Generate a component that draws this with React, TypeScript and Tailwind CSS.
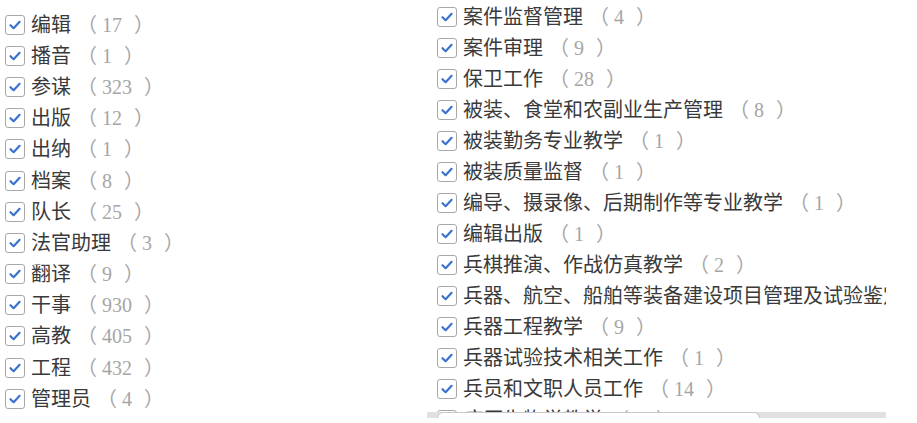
type Item = {
  name: string;
  count: number;
};

const leftItems: Item[] = [
  { name: "编辑", count: 17 },
  { name: "播音", count: 1 },
  { name: "参谋", count: 323 },
  { name: "出版", count: 12 },
  { name: "出纳", count: 1 },
  { name: "档案", count: 8 },
  { name: "队长", count: 25 },
  { name: "法官助理", count: 3 },
  { name: "翻译", count: 9 },
  { name: "干事", count: 930 },
  { name: "高教", count: 405 },
  { name: "工程", count: 432 },
  { name: "管理员", count: 4 },
];

const rightItems: Item[] = [
  { name: "案件监督管理", count: 4 },
  { name: "案件审理", count: 9 },
  { name: "保卫工作", count: 28 },
  { name: "被装、食堂和农副业生产管理", count: 8 },
  { name: "被装勤务专业教学", count: 1 },
  { name: "被装质量监督", count: 1 },
  { name: "编导、摄录像、后期制作等专业教学", count: 1 },
  { name: "编辑出版", count: 1 },
  { name: "兵棋推演、作战仿真教学", count: 2 },
  { name: "兵器、航空、船舶等装备建设项目管理及试验鉴定", count: 3 },
  { name: "兵器工程教学", count: 9 },
  { name: "兵器试验技术相关工作", count: 1 },
  { name: "兵员和文职人员工作", count: 14 },
  { name: "病原生物学教学", count: 1 },
];

function CheckBox() {
  return (
    <span className="flex h-[20px] w-[20px] shrink-0 items-center justify-center rounded-[3px] border border-[#a8a8a8] bg-white">
      <svg width="14" height="14" viewBox="0 0 14 14" fill="none">
        <path
          d="M2.5 7.2 L5.6 10.2 L11.6 3.8"
          stroke="#3b72cc"
          strokeWidth="2.2"
          strokeLinecap="round"
          strokeLinejoin="round"
        />
      </svg>
    </span>
  );
}

function Row({ item, tall }: { item: Item; tall?: boolean }) {
  return (
    <label
      className={
        (tall ? "h-[31.2px]" : "h-[31px]") +
        " flex shrink-0 items-center gap-[6px] whitespace-nowrap"
      }
    >
      <CheckBox />
      <span className="text-[20px] leading-none text-[#3a3a3a]">{item.name}</span>
      <span className="text-[20px] leading-none text-[#a6a6a6]">
        （ <span className="mr-[7px]">{item.count}</span> ）
      </span>
    </label>
  );
}

export default function App() {
  return (
    <div
      className="flex h-[423px] w-[917px] overflow-hidden bg-white"
      style={{ fontFamily: '"Liberation Serif", "Noto Sans CJK SC", serif' }}
    >
      <div className="flex w-[427px] shrink-0 flex-col pl-[5px] pt-[9px]">
        {leftItems.map((item, index) => (
          <Row item={item} tall key={index} />
        ))}
      </div>

      <div className="flex w-[459px] shrink-0 flex-col">
        <div className="flex h-[412px] flex-col overflow-hidden pl-[10px] pt-[1px]">
          {rightItems.map((item, index) => (
            <Row item={item} key={index} />
          ))}
        </div>
        <div className="flex h-[6px] bg-[#e1e1e1] pl-[10px]">
          <div className="h-full w-[323px] rounded-t-[6px] border-x border-t border-[#c9c9c9] bg-white" />
        </div>
      </div>
    </div>
  );
}
